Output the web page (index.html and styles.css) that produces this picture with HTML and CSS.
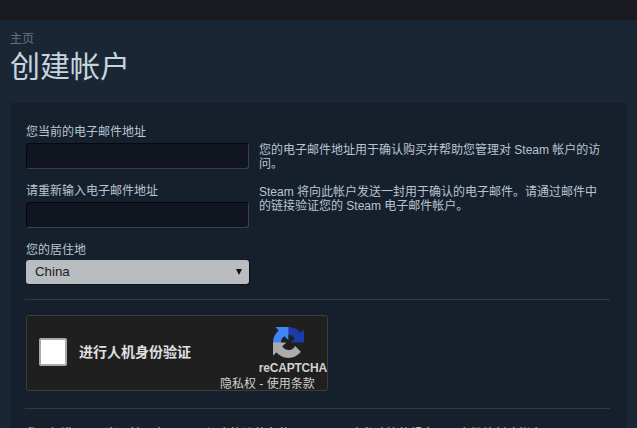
FILE: index.html
```html
<!DOCTYPE html>
<html lang="zh-CN">
<head>
<meta charset="utf-8">
<title>创建帐户</title>
<link rel="stylesheet" href="styles.css">
</head>
<body>
<div class="topbar"></div>
<main class="page">
  <div class="crumb">主页</div>
  <h1 class="title">创建帐户</h1>
  <section class="panel">
    <div class="rows">
      <div class="row">
        <div class="field">
          <label class="label">您当前的电子邮件地址</label>
          <input class="input" type="text">
        </div>
        <p class="note">您的电子邮件地址用于确认购买并帮助您管理对 Steam 帐户的访问。</p>
      </div>
      <div class="row">
        <div class="field">
          <label class="label">请重新输入电子邮件地址</label>
          <input class="input" type="text">
        </div>
        <p class="note tight">Steam 将向此帐户发送一封用于确认的电子邮件。请通过邮件中的链接验证您的 Steam 电子邮件帐户。</p>
      </div>
      <div class="row">
        <div class="field">
          <label class="label short">您的居住地</label>
          <div class="select"><span class="value">China</span><span class="arrow"></span></div>
        </div>
      </div>
    </div>
    <hr class="rule first">
    <div class="captcha">
      <div class="box"></div>
      <div class="prompt">进行人机身份验证</div>
      <div class="brand">
        <svg class="logo" viewBox="0 0 64 64" width="31" height="31" aria-hidden="true">
          <path d="M64 31.955l-.033-1.37V4.687l-7.16 7.16C50.948 4.674 42.033.093 32.05.093c-10.4 0-19.622 4.958-25.458 12.64l11.736 11.86a15.55 15.55 0 0 1 4.754-5.334c2.05-1.6 4.952-2.906 8.968-2.906.485 0 .86.057 1.135.163 4.976.393 9.288 3.14 11.828 7.124l-8.307 8.307c10.522-.04 22.4-.066 27.295.005" fill="#1c3aa9"/>
          <path d="M31.862.094l-1.37.033H4.594l7.16 7.16C4.58 13.147 0 22.06 0 32.046c0 10.4 4.958 19.622 12.64 25.458l11.86-11.736a15.55 15.55 0 0 1-5.334-4.754c-1.6-2.05-2.906-4.952-2.906-8.968 0-.485.057-.86.163-1.135.393-4.976 3.14-9.288 7.124-11.828l8.307 8.307c-.04-10.522-.066-22.4.005-27.295" fill="#4285f4"/>
          <path d="M.001 32.045l.033 1.37v25.898l7.16-7.16c5.86 7.173 14.774 11.754 24.76 11.754 10.4 0 19.622-4.958 25.458-12.64l-11.736-11.86a15.55 15.55 0 0 1-4.754 5.334c-2.05 1.6-4.952 2.906-8.968 2.906-.485 0-.86-.057-1.135-.163-4.976-.393-9.288-3.14-11.828-7.124l8.307-8.307c-10.522.04-22.4.066-27.295-.005" fill="#ababab"/>
        </svg>
        <div class="wordmark">reCAPTCHA</div>
        <div class="terms">隐私权 - 使用条款</div>
      </div>
    </div>
    <hr class="rule second">
    <p class="legal">我已年满 13 周岁，并同意 Steam 订户协议的条款以及 Valve 隐私政策的规定，同意继续创建帐户。</p>
  </section>
</main>
</body>
</html>
```
FILE: styles.css
```css
* { box-sizing: border-box; }
html, body { margin: 0; height: 100%; overflow: hidden; }
body {
  background: #1b2635;
  color: #c6d4df;
  font-family: "Liberation Sans", "Noto Sans CJK SC", sans-serif;
  font-size: 12px;
}
.topbar { height: 20px; background: #191a1f; }
.page { padding: 11px 11px 0 10px; }
.crumb { font-size: 12px; line-height: 16px; color: #66717d; }
.title {
  margin: 0;
  font-size: 30px;
  font-weight: 400;
  line-height: 40px;
  color: #c6d4df;
  height: 39px;
}
.panel {
  margin-top: 17px;
  background: #16202d;
  padding: 21px 16px 0 15px;
  height: 325px;
  overflow: hidden;
}
.rows { display: flex; flex-direction: column; gap: 14px; padding-left: 1px; }
.row { display: flex; gap: 9px; }
.field { width: 224px; flex: none; display: flex; flex-direction: column; }
.label { font-size: 12px; line-height: 16px; height: 19px; color: #b8c5d0; }
.label.short { height: 18px; }
.input {
  display: block;
  width: 223px;
  height: 26px;
  margin: 0;
  background: #10151f;
  border: 1px solid #05080c;
  border-right-color: #38424f;
  border-bottom-color: #38424f;
  border-radius: 3px;
  padding: 0;
}
.note {
  margin: 19px 0 -2px;
  width: 345px;
  font-size: 12px;
  line-height: 14px;
  color: #b8c5d0;
}
.note.tight { margin-top: 2px; margin-bottom: 0; }
.select {
  display: flex;
  align-items: center;
  justify-content: space-between;
  width: 223px;
  height: 24px;
  padding: 0 7px 0 9px;
  background: #b9bcc0;
  border-radius: 3px;
  color: #17202a;
  font-size: 13.3px;
  box-shadow: 1px 1px 0 #0c1118;
}
.value { margin-bottom: 1px; }
.arrow {
  width: 0;
  height: 0;
  border-left: 3px solid transparent;
  border-right: 3px solid transparent;
  border-top: 6px solid #111;
}
.rule { margin: 0; border: 0; height: 1px; background: #2f3a46; }
.rule.first { margin-top: 15px; }
.captcha {
  display: flex;
  align-items: center;
  width: 302px;
  height: 76px;
  margin: 15px 0 0 1px;
  padding: 0 0 0 12px;
  background: #1f1f1f;
  border: 1px solid #3d3d3d;
  border-radius: 3px;
  position: relative;
}
.box {
  width: 28px;
  height: 28px;
  margin-bottom: 2px;
  background: #fff;
  border: 2px solid #aaa;
  border-radius: 2px;
  flex: none;
}
.prompt { margin: 0 0 4px 12px; font-size: 14px; font-weight: 700; color: #e0e0e0; }
.brand {
  position: absolute;
  right: 0;
  top: 11px;
  display: flex;
  flex-direction: column;
  width: 107px;
}
.logo { display: block; align-self: flex-end; margin-right: 23px; }
.wordmark {
  font-size: 12px;
  font-weight: 700;
  line-height: 14px;
  color: #d0d0d0;
  align-self: flex-end;
  margin-top: 3px;
  letter-spacing: -0.2px;
}
.terms { font-size: 12px; line-height: 16px; margin-top: 1px; color: #d0d0d0; white-space: nowrap; }
.rule.second { margin-top: 17px; }
.legal { margin: 18px 0 0; font-size: 12px; line-height: 14px; color: #c6d4df; }
```
